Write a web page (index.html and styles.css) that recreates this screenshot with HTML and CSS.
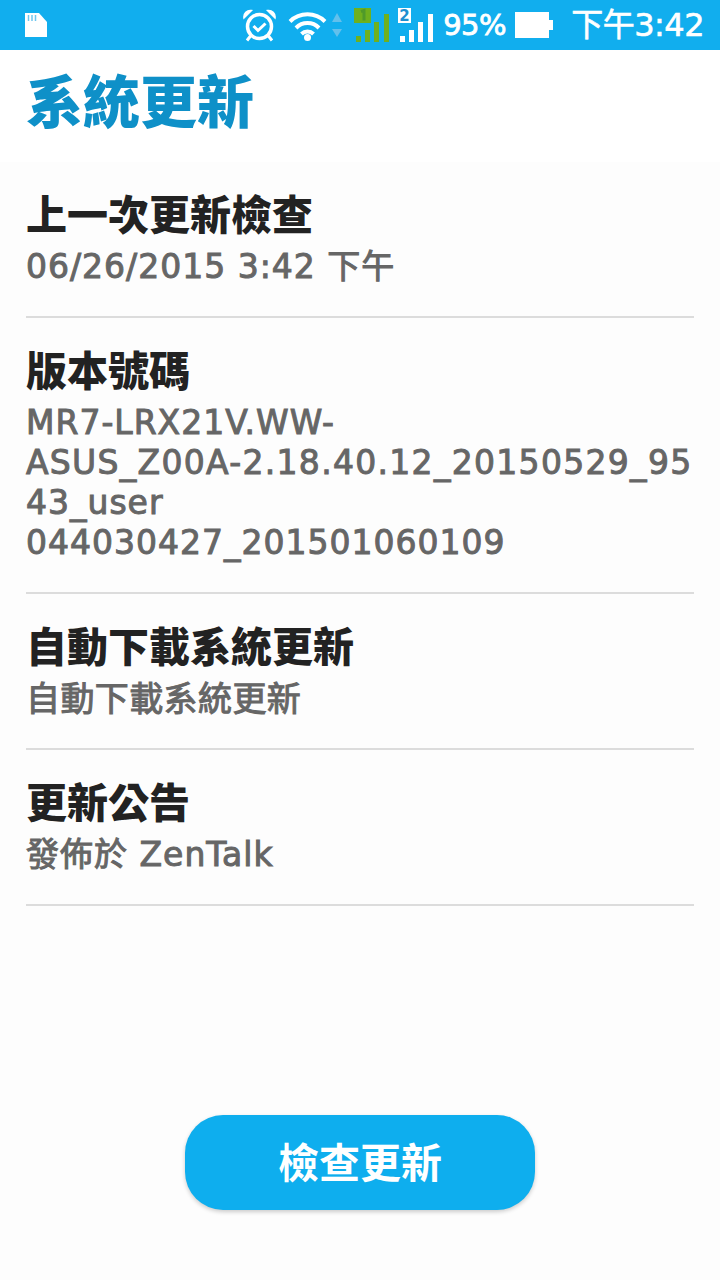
FILE: index.html
```html
<!DOCTYPE html>
<html lang="zh-Hant">
<head>
  <meta charset="utf-8">
  <title>系統更新</title>
  <link rel="stylesheet" href="styles.css">
</head>
<body>
<div class="screen">
  <div class="statusbar">
    <svg class="ic-sd" width="24" height="26" viewBox="0 0 24 26"><path d="M1 1h14l8 9v15H1z" fill="#fff"/><path d="M4.500 3v6M8 3v6M11.500 3v6" stroke="#6fc6ee" stroke-width="1.500"/></svg>
    <div class="status-right">
      <svg class="ic-alarm" width="33" height="33" viewBox="0 0 33 33" fill="none" stroke="#fff"><circle cx="16.500" cy="17.500" r="12" stroke-width="3.500"/><path d="M10.500 17l4.500 4.500 7.500-7" stroke-width="3"/><path d="M1 9a6.500 6.500 0 0 1 7.500-7.500zM32 9a6.500 6.500 0 0 0-7.500-7.500z" fill="#fff" stroke-width="1.500"/><path d="M7.500 27l-3.500 4.500M25.500 27l3.500 4.500" stroke-width="3"/></svg>
      <svg class="ic-wifi" width="39" height="32" viewBox="0 0 39 32" fill="none" stroke="#fff" stroke-width="4"><path d="M2 12.500a25 25 0 0 1 35 0M8 19a16 16 0 0 1 23 0M13.500 25a8.500 8.500 0 0 1 12 0"/><circle cx="19.500" cy="28.500" r="3.500" fill="#fff" stroke="none"/></svg>
      <svg class="ic-updown" width="10" height="24" viewBox="0 0 10 24"><path d="M5 0l5 9H0z" fill="#62c0ec"/><path d="M5 24l5-8H0z" fill="#62c0ec"/></svg>
      <svg class="ic-sim" width="36" height="34" viewBox="0 0 36 34"><rect x="0" y="0" width="17" height="15" fill="#6fb01e"/><path d="M7 3.500l3-1v10" stroke="#4f9a2a" stroke-width="3" fill="none"/><g fill="#6fb01e"><rect x="2" y="28" width="5" height="6"/><rect x="11" y="22" width="5" height="12"/><rect x="20" y="14" width="5" height="20"/><rect x="30" y="6" width="5" height="28"/></g></svg>
      <svg class="ic-sim" width="36" height="34" viewBox="0 0 36 34"><rect x="0" y="0" width="13" height="15" fill="#fff"/><text x="6.500" y="13" class="sim-num">2</text><g fill="#fff"><rect x="2" y="28" width="5" height="6"/><rect x="11" y="22" width="5" height="12"/><rect x="20" y="14" width="5" height="20"/><rect x="30" y="6" width="5" height="28"/></g></svg>
      <span class="batt-pct">95%</span>
      <svg class="ic-batt" width="40" height="28" viewBox="0 0 40 28"><path d="M1 1h34v8h4v10h-4v8H1z" fill="#fff"/></svg>
      <span class="clock">下午3:42</span>
    </div>
  </div>

  <h1 class="title">系統更新</h1>

  <div class="prefs">
    <div class="pref">
      <div class="pref-name">上一次更新檢查</div>
      <div class="pref-sub">06/26/2015 3:42 下午</div>
    </div>
    <div class="pref">
      <div class="pref-name">版本號碼</div>
      <div class="pref-sub">MR7-LRX21V.WW-<br><span class="wide">ASUS_Z00A-2.18.40.12_20150529_95</span><br>43_user<br>044030427_201501060109</div>
    </div>
    <div class="pref">
      <div class="pref-name">自動下載系統更新</div>
      <div class="pref-sub pref-sub-cjk">自動下載系統更新</div>
    </div>
    <div class="pref">
      <div class="pref-name">更新公告</div>
      <div class="pref-sub">發佈於 ZenTalk</div>
    </div>
  </div>

  <div class="actions">
    <button class="btn-check">檢查更新</button>
  </div>
</div>
</body>
</html>
```
FILE: styles.css
```css
html, body {
  margin: 0;
  padding: 0;
}
body {
  font-family: "DejaVu Sans", "Noto Sans CJK TC", sans-serif;
  background: #fdfdfd;
}
.screen {
  width: 720px;
  height: 1280px;
  display: flex;
  flex-direction: column;
  overflow: hidden;
}
.statusbar {
  height: 50px;
  background: #11aeee;
  display: flex;
  align-items: center;
  justify-content: space-between;
  padding: 0 16px 0 24px;
  color: #fff;
  flex: none;
}
.status-right {
  display: flex;
  align-items: center;
}
.ic-alarm { margin-right: 12px; }
.ic-wifi { margin-right: 5px; }
.ic-updown { margin-right: 12px; }
.ic-sim { margin-right: 8px; }
.sim-num {
  font-size: 15px;
  font-weight: 700;
  fill: #1d8fd0;
  text-anchor: middle;
}
.batt-pct {
  font-size: 29px;
  line-height: 50px;
  letter-spacing: -.5px;
  margin: 0 8px 0 1px;
  -webkit-text-stroke: .8px #fff;
}
.ic-batt { margin-right: 17px; }
.clock {
  font-size: 32px;
  line-height: 50px;
  letter-spacing: -.5px;
  -webkit-text-stroke: .6px #fff;
}
.title {
  margin: 0;
  padding: 0 26px;
  height: 112px;
  line-height: 106px;
  font-size: 57px;
  font-weight: 900;
  color: #0e90c8;
  background: #fff;
  flex: none;
}
.prefs {
  padding: 0 26px;
  flex: 1;
}
.pref {
  border-bottom: 2px solid #dcdcdc;
  padding: 29px 0 29px;
}
.pref-name {
  font-size: 41px;
  line-height: 50px;
  font-weight: 900;
  color: #222;
}
.pref-sub {
  margin-top: 6px;
  font-size: 33px;
  line-height: 40px;
  letter-spacing: 1px;
  color: #666;
  white-space: nowrap;
  -webkit-text-stroke: 1px #666;
}
.pref-sub .wide {
  letter-spacing: 1.3px;
}
.pref-sub-cjk {
  font-size: 34px;
  letter-spacing: .4px;
}
.actions {
  display: flex;
  justify-content: center;
  padding-bottom: 70px;
}
.btn-check {
  width: 350px;
  height: 95px;
  padding: 0 0 6px;
  border: none;
  border-radius: 38px;
  background: #0eaeee;
  color: #fff;
  font-family: inherit;
  font-size: 41px;
  font-weight: 700;
  box-shadow: 0 2px 4px rgba(0,0,0,.2);
}
```
